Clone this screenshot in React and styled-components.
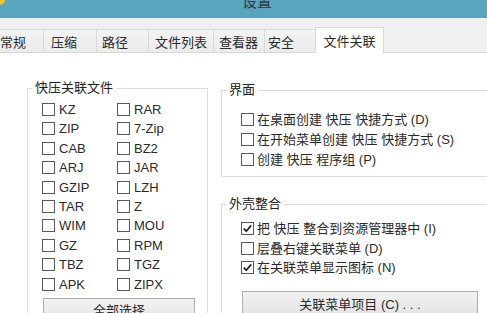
import React from 'react';
import styled, { createGlobalStyle } from 'styled-components';

const GlobalStyle = createGlobalStyle`
  html, body {
    margin: 0;
    padding: 0;
    overflow: hidden;
    background: #f0f0f0;
  }
  body {
    font-family: "Liberation Sans", "Noto Sans CJK SC", sans-serif;
    font-size: 13px;
    color: #222;
  }
`;

const Window = styled.div`
  width: 514px;
  height: 313px;
  background: #f0f0f0;
  overflow: hidden;
  display: flex;
  flex-direction: column;
`;

const TitleBar = styled.div`
  flex: none;
  height: 18px;
  background: #5aa5be;
  display: grid;
  grid-template-columns: 1fr auto 1fr;
  overflow: hidden;
`;

const Title = styled.div`
  font-size: 15px;
  line-height: 15px;
  margin-top: -6px;
  color: #2c3c42;
`;

const TabStrip = styled.div`
  flex: none;
  box-sizing: border-box;
  height: 35px;
  display: flex;
  align-items: flex-end;
  margin-left: -3px;
  border-bottom: 1px solid #d9d9d9;
`;

const Tab = styled.div`
  box-sizing: border-box;
  width: ${p => p.$w}px;
  height: ${p => (p.$active ? 26 : 23)}px;
  margin-right: -1px;
  margin-bottom: ${p => (p.$active ? -1 : 0)}px;
  padding-left: ${p => p.$pl}px;
  display: flex;
  align-items: center;
  justify-content: ${p => (p.$active ? 'center' : 'flex-start')};
  border: 1px solid #d9d9d9;
  border-bottom: none;
  background: ${p => (p.$active ? '#fff' : 'linear-gradient(#f3f3f3, #ebebeb)')};
  position: relative;
  z-index: ${p => (p.$active ? 1 : 0)};
  color: #2a2a2a;
  white-space: nowrap;
`;

const Page = styled.div`
  flex: 1;
  background: #fff;
  display: grid;
  grid-template-columns: 181px 1fr;
  column-gap: 13px;
  align-items: start;
  padding: 27px 0 0 27px;
`;

const Group = styled.fieldset`
  margin: ${p => p.$mt || 0}px 0 0 0;
  min-width: 0;
  border: 1px solid #dcdcdc;
  padding: ${p => p.$pt}px 0 ${p => p.$pb || 0}px ${p => p.$pl}px;
`;

const Legend = styled.legend`
  padding: 0 3px;
  margin-left: ${p => p.$ml}px;
  line-height: 16px;
  color: #222;
`;

const CheckGrid = styled.div`
  display: grid;
  grid-template-columns: 75px 75px;
  row-gap: 6.4px;
`;

const CheckList = styled.div`
  display: flex;
  flex-direction: column;
  gap: ${p => p.$gap}px;
`;

const CheckRow = styled.label`
  display: flex;
  align-items: center;
  gap: ${p => p.$gap || 4}px;
  height: 13px;
  line-height: 13px;
  white-space: nowrap;
  color: #2a2a2a;
`;

const Box = styled.span`
  box-sizing: border-box;
  flex: none;
  width: 13px;
  height: 13px;
  border: 1px solid #5a5a5a;
  background: #fff;
  display: flex;
  align-items: center;
  justify-content: center;
`;

const Button = styled.div`
  box-sizing: border-box;
  width: ${p => p.$w}px;
  height: 24px;
  margin: ${p => p.$mt}px 0 0 1px;
  border: 1px solid #adadad;
  background: linear-gradient(#f2f2f2, #e4e4e4);
  display: flex;
  align-items: center;
  justify-content: center;
  color: #2a2a2a;
  white-space: nowrap;
`;

const RightCol = styled.div`
  display: flex;
  flex-direction: column;
  margin-top: 2px;
`;

const Checkbox = ({ checked, label, gap }) => (
  <CheckRow $gap={gap}>
    <Box>
      {checked && (
        <svg width="11" height="11" viewBox="0 0 11 11">
          <path d="M1.8 5.6 L4.3 8.2 L9.2 2.4" fill="none" stroke="#222" strokeWidth="1.7" />
        </svg>
      )}
    </Box>
    <span>{label}</span>
  </CheckRow>
);

const tabs = [
  { label: '常规', w: 47, pl: 2 },
  { label: '压缩', w: 54, pl: 7 },
  { label: '路径', w: 53, pl: 5 },
  { label: '文件列表', w: 66, pl: 6 },
  { label: '查看器', w: 52, pl: 5 },
  { label: '安全', w: 52, pl: 3 },
  { label: '文件关联', w: 69, pl: 0, active: true },
];

const formats = [
  ['KZ', 'RAR'],
  ['ZIP', '7-Zip'],
  ['CAB', 'BZ2'],
  ['ARJ', 'JAR'],
  ['GZIP', 'LZH'],
  ['TAR', 'Z'],
  ['WIM', 'MOU'],
  ['GZ', 'RPM'],
  ['TBZ', 'TGZ'],
  ['APK', 'ZIPX'],
];

export default function App() {
  return (
    <>
      <GlobalStyle />
      <Window>
        <TitleBar>
          <svg width="8" height="8" viewBox="0 0 8 8">
            <circle cx="0" cy="0" r="5" fill="#f2c230" />
          </svg>
          <Title>设置</Title>
          <span />
        </TitleBar>
        <TabStrip>
          {tabs.map(t => (
            <Tab key={t.label} $w={t.w} $pl={t.pl} $active={t.active}>
              {t.label}
            </Tab>
          ))}
        </TabStrip>
        <Page>
          <Group $pt={7} $pl={14}>
            <Legend $ml={-10}>快压关联文件</Legend>
            <CheckGrid>
              {formats.flat().map(f => (
                <Checkbox key={f} label={f} />
              ))}
            </CheckGrid>
            <Button $w={152} $mt={7}>全部选择</Button>
          </Group>
          <RightCol>
            <Group $pt={15} $pb={10} $pl={19}>
              <Legend $ml={-15}>界面</Legend>
              <CheckList $gap={7}>
                <Checkbox gap={3} label="在桌面创建 快压 快捷方式 (D)" />
                <Checkbox gap={3} label="在开始菜单创建 快压 快捷方式 (S)" />
                <Checkbox gap={3} label="创建 快压 程序组 (P)" />
              </CheckList>
            </Group>
            <Group $mt={19} $pt={10} $pb={20} $pl={19}>
              <Legend $ml={-15}>外壳整合</Legend>
              <CheckList $gap={6.5}>
                <Checkbox gap={3} checked label="把 快压 整合到资源管理器中 (I)" />
                <Checkbox gap={3} label="层叠右键关联菜单 (D)" />
                <Checkbox gap={3} checked label="在关联菜单显示图标 (N)" />
              </CheckList>
              <Button $w={236} $mt={17}>关联菜单项目 (C) . . .</Button>
            </Group>
          </RightCol>
        </Page>
      </Window>
    </>
  );
}
